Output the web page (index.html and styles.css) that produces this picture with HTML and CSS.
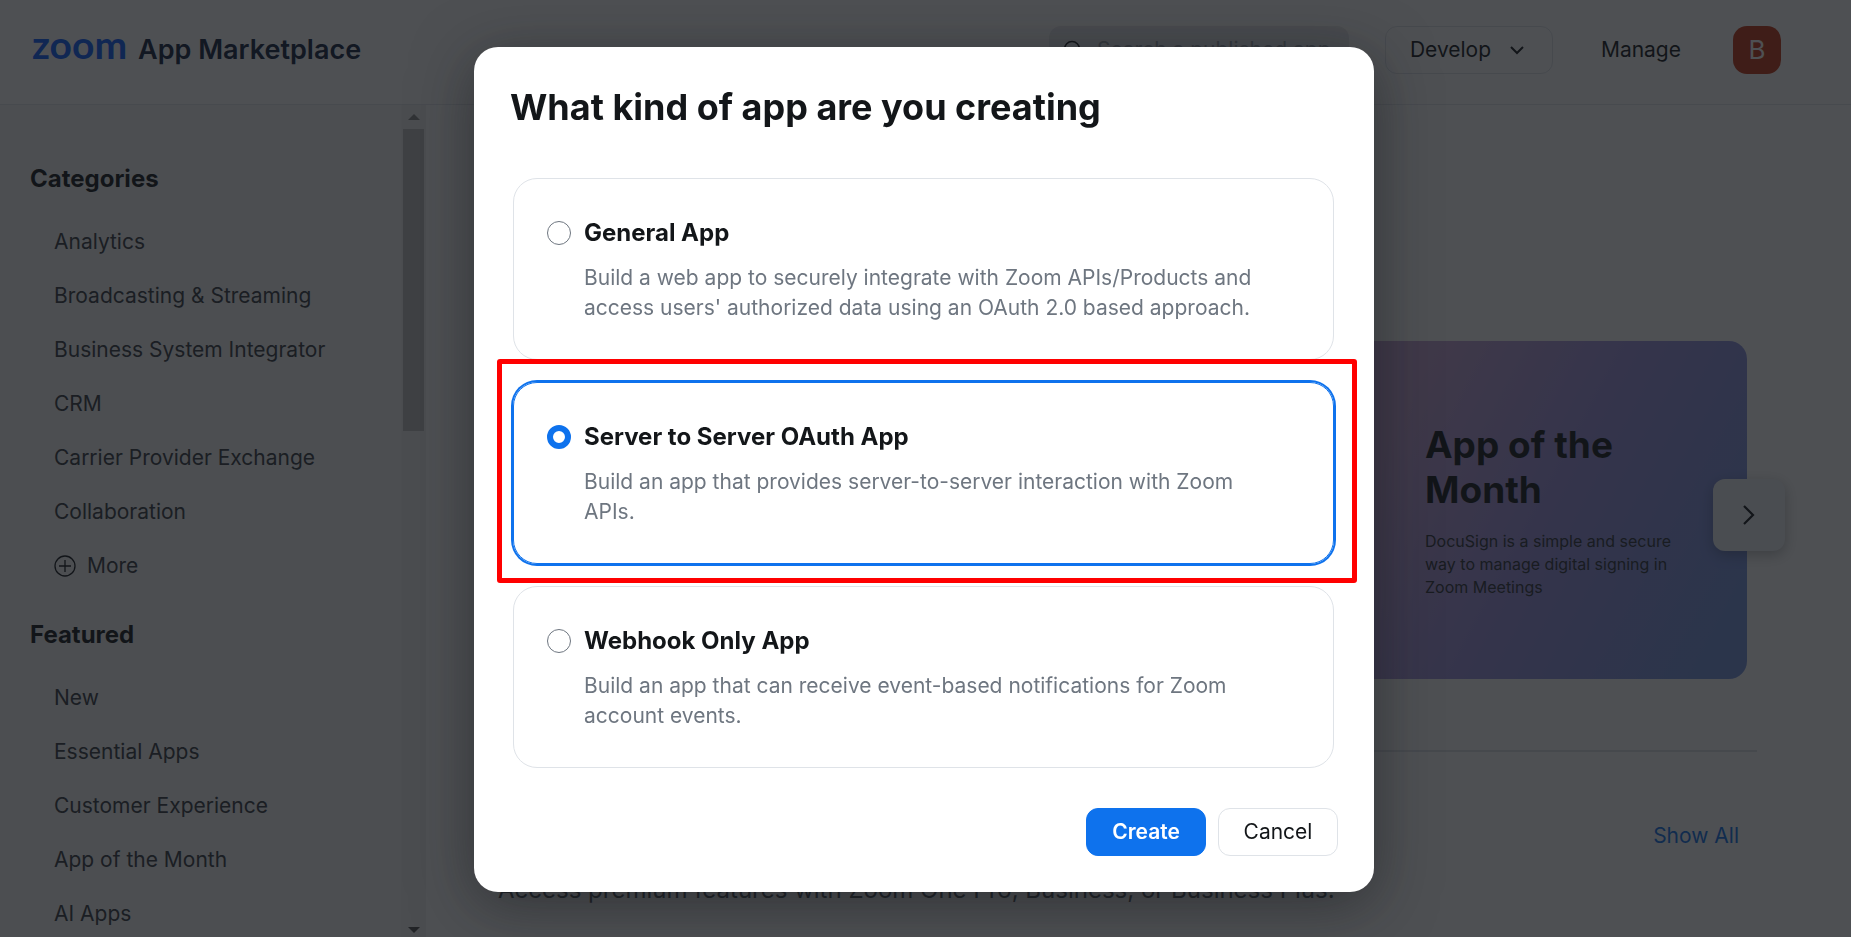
FILE: index.html
```html
<!DOCTYPE html>
<html lang="en">
<head>
  <meta charset="UTF-8">
  <meta name="viewport" content="width=device-width, initial-scale=1.0">
  <title>Zoom App Marketplace</title>
  <link rel="stylesheet" href="styles.css">
</head>
<body>
  <header class="header">
    <a class="brand" href="#">
      <span class="brand-logo">zoom</span>
      <span class="brand-name">App Marketplace</span>
    </a>
    <div class="header-right">
      <label class="search">
        <svg width="20" height="20" viewBox="0 0 20 20" fill="none" stroke="#131619" stroke-width="1.5">
          <circle cx="9" cy="9" r="7.5"/>
          <path d="M14.5 14.5L19 19"/>
        </svg>
        <input type="text" placeholder="Search a published app" aria-label="Search a published app">
      </label>
      <button class="develop">
        Develop
        <svg width="14" height="9" viewBox="0 0 14 9" fill="none" stroke="#131619" stroke-width="2">
          <path d="M1 1l6 6 6-6"/>
        </svg>
      </button>
      <a class="manage" href="#">Manage</a>
      <button class="avatar">B</button>
    </div>
  </header>

  <div class="page">
    <aside class="sidebar">
      <nav class="menu">
        <h2>Categories</h2>
        <ul>
          <li><a href="#">Analytics</a></li>
          <li><a href="#">Broadcasting &amp; Streaming</a></li>
          <li><a href="#">Business System Integrator</a></li>
          <li><a href="#">CRM</a></li>
          <li><a href="#">Carrier Provider Exchange</a></li>
          <li><a href="#">Collaboration</a></li>
          <li>
            <a href="#">
              <svg width="22" height="22" viewBox="0 0 22 22" fill="none" stroke="#131619" stroke-width="1.3">
                <circle cx="11" cy="11" r="10"/>
                <path d="M11 5v12M5 11h12"/>
              </svg>
              More
            </a>
          </li>
        </ul>
        <h2>Featured</h2>
        <ul>
          <li><a href="#">New</a></li>
          <li><a href="#">Essential Apps</a></li>
          <li><a href="#">Customer Experience</a></li>
          <li><a href="#">App of the Month</a></li>
          <li><a href="#">AI Apps</a></li>
        </ul>
      </nav>
      <div class="scrollbar">
        <svg width="12" height="6" viewBox="0 0 12 6"><path d="M6 0l6 6H0z" fill="#8b8b8b"/></svg>
        <div class="thumb"></div>
        <svg width="12" height="6" viewBox="0 0 12 6"><path d="M0 0h12L6 6z" fill="#505050"/></svg>
      </div>
    </aside>

    <main class="main">
      <section class="banner">
        <div class="banner-text">
          <h2>App of the Month</h2>
          <p>DocuSign is a simple and secure way to manage digital signing in Zoom Meetings</p>
        </div>
        <button class="next" aria-label="Next">
          <svg width="12" height="20" viewBox="0 0 12 20" fill="none" stroke="#131619" stroke-width="2.2">
            <path d="M1 1l9 9-9 9"/>
          </svg>
        </button>
      </section>
      <section class="premium">
        <a class="show-all" href="#">Show All</a>
        <p>Access premium features with Zoom One Pro, Business, or Business Plus.</p>
      </section>
    </main>
  </div>

  <div class="overlay">
    <form class="modal" role="dialog" aria-labelledby="modalTitle">
      <h1 id="modalTitle">What kind of app are you creating</h1>
      <div class="options">
        <label class="option">
          <input type="radio" name="appType" value="general">
          <span class="option-title">General App</span>
          <span class="option-desc">Build a web app to securely integrate with Zoom APIs/Products and access users' authorized data using an OAuth 2.0 based approach.</span>
        </label>
        <label class="option selected">
          <input type="radio" name="appType" value="s2s" checked>
          <span class="option-title">Server to Server OAuth App</span>
          <span class="option-desc">Build an app that provides server-to-server interaction with Zoom APIs.</span>
        </label>
        <label class="option">
          <input type="radio" name="appType" value="webhook">
          <span class="option-title">Webhook Only App</span>
          <span class="option-desc">Build an app that can receive event-based notifications for Zoom account events.</span>
        </label>
      </div>
      <div class="actions">
        <button type="button" class="btn btn-primary">Create</button>
        <button type="button" class="btn">Cancel</button>
      </div>
    </form>
  </div>
</body>
</html>
```
FILE: styles.css
```css
* {
  margin: 0;
  padding: 0;
  box-sizing: border-box;
}
body {
  height: 100vh;
  display: flex;
  flex-direction: column;
  overflow: hidden;
  background: #fff;
  color: #131619;
  font-family: 'Inter', sans-serif;
  font-size: 21px;
  line-height: 30px;
}
a {
  color: inherit;
  text-decoration: none;
}
ul {
  list-style: none;
}
button, input {
  font: inherit;
  color: inherit;
}
button {
  cursor: pointer;
}

/* header */
.header {
  display: flex;
  flex-shrink: 0;
  justify-content: space-between;
  align-items: center;
  padding: 26px 70px 30px 32px;
  border-bottom: 1px solid #e4e7ec;
}
.brand {
  display: flex;
  align-items: baseline;
  gap: 11px;
}
.brand-logo {
  font-family: 'Lato', sans-serif;
  font-size: 39px;
  line-height: 36px;
  font-weight: 700;
  color: #0b5cff;
}
.brand-name {
  font-size: 27px;
  line-height: 48px;
  font-weight: 600;
  color: #10203f;
}
.header-right {
  display: flex;
  align-items: center;
}
.search {
  display: flex;
  align-items: center;
  gap: 14px;
  width: 300px;
  height: 48px;
  padding: 0 14px;
  margin-right: 36px;
  background: #e8eaee;
  border-radius: 12px;
}
.search input {
  flex: 1;
  min-width: 0;
  border: none;
  outline: none;
  background: none;
}
.search input::placeholder {
  color: #98a0a9;
}
.develop {
  display: flex;
  justify-content: space-between;
  align-items: center;
  width: 168px;
  height: 48px;
  padding: 0 28px 0 24px;
  margin-right: 48px;
  background: none;
  border: 1px solid #dfe3e8;
  border-radius: 12px;
}
.manage {
  margin-right: 52px;
}
.avatar {
  width: 48px;
  height: 48px;
  border: none;
  border-radius: 14px;
  background: #c43715;
  color: #fff;
  font-size: 26px;
}

/* page */
.page {
  flex: 1;
  min-height: 0;
  display: flex;
}
.sidebar {
  display: flex;
  width: 426px;
  flex-shrink: 0;
  background: #f5f6f8;
}
.menu {
  flex: 1;
  overflow: hidden;
  padding: 56px 0 0 30px;
}
.menu h2 {
  font-size: 24px;
  line-height: 36px;
  font-weight: 700;
  margin-bottom: 18px;
}
.menu ul {
  padding-left: 24px;
  margin-bottom: 24px;
}
.menu a {
  display: flex;
  align-items: center;
  gap: 11px;
  height: 54px;
  color: #343a41;
}
.scrollbar {
  display: flex;
  flex-direction: column;
  align-items: center;
  width: 25px;
  padding: 9px 0 4px;
  background: #f1f1f1;
}
.thumb {
  width: 21px;
  height: 302px;
  margin: 9px 0 auto;
  background: #c1c1c1;
}
.main {
  flex: 1;
  min-width: 0;
  padding: 236px 94px 0 72px;
}
.banner {
  position: relative;
  display: flex;
  justify-content: flex-end;
  align-items: center;
  height: 338px;
  margin-right: 10px;
  padding-right: 62px;
  border-radius: 18px;
  background: linear-gradient(118deg, #c4a2d6 66%, #9a90e0 80%, #7692e0 96%);
}
.banner-text {
  width: 260px;
}
.banner h2 {
  font-size: 37px;
  line-height: 45px;
  margin-bottom: 18px;
}
.banner p {
  font-size: 16px;
  line-height: 23px;
  color: #2c3138;
}
.next {
  position: absolute;
  top: 138px;
  right: -38px;
  display: flex;
  justify-content: center;
  align-items: center;
  width: 72px;
  height: 72px;
  border: none;
  border-radius: 12px;
  background: #eef2f7;
  box-shadow: 0 4px 14px rgba(19, 22, 25, 0.3);
}
.premium {
  display: flex;
  flex-direction: column;
  margin-top: 71px;
  padding: 69px 18px 0 0;
  border-top: 2px solid #dfe3e8;
}
.show-all {
  align-self: flex-end;
  color: #0e71eb;
}
.premium p {
  margin-top: 21px;
  font-size: 24px;
  line-height: 36px;
  color: #444b53;
}

/* modal */
.overlay {
  position: fixed;
  inset: 0;
  display: flex;
  justify-content: center;
  align-items: flex-start;
  padding: 47px 3px 0 0;
  background: rgba(19, 22, 25, 0.75);
}
.modal {
  width: 900px;
  padding: 36px;
  background: #fff;
  border-radius: 24px;
  box-shadow: 0 12px 60px rgba(19, 22, 25, 0.5);
}
.modal h1 {
  font-size: 36px;
  line-height: 48px;
  font-weight: 700;
}
.options {
  display: flex;
  flex-direction: column;
  gap: 22px;
  padding: 47px 4px 40px 3px;
}
.option {
  position: relative;
  display: grid;
  grid-template-columns: 24px 1fr;
  column-gap: 13px;
  row-gap: 12px;
  align-items: center;
  padding: 36px 48px 36px 33px;
  border: 1px solid #dfe3e8;
  border-radius: 24px;
  cursor: pointer;
}
.option input {
  appearance: none;
  width: 24px;
  height: 24px;
  border: 1px solid #6e7680;
  border-radius: 50%;
}
.option input:checked {
  border: 6px solid #0e72ed;
}
.option-title {
  font-size: 24px;
  line-height: 36px;
  font-weight: 700;
}
.option-desc {
  grid-column: 2;
  color: #6e7680;
}
.option.selected {
  border-color: #0e72ed;
  box-shadow: 0 0 0 2px #0e72ed;
}
.option.selected::after {
  content: '';
  position: absolute;
  inset: -24px -24px -20px -17px;
  border: 5px solid #f00;
  border-radius: 3px;
  z-index: 1;
}
.actions {
  display: flex;
  justify-content: flex-end;
  gap: 12px;
}
.btn {
  min-width: 120px;
  height: 48px;
  padding: 0 24px;
  border: 1px solid #dfe3e8;
  border-radius: 12px;
  background: #fff;
}
.btn-primary {
  border-color: #0e72ed;
  background: #0e72ed;
  color: #fff;
  font-weight: 600;
}
```
